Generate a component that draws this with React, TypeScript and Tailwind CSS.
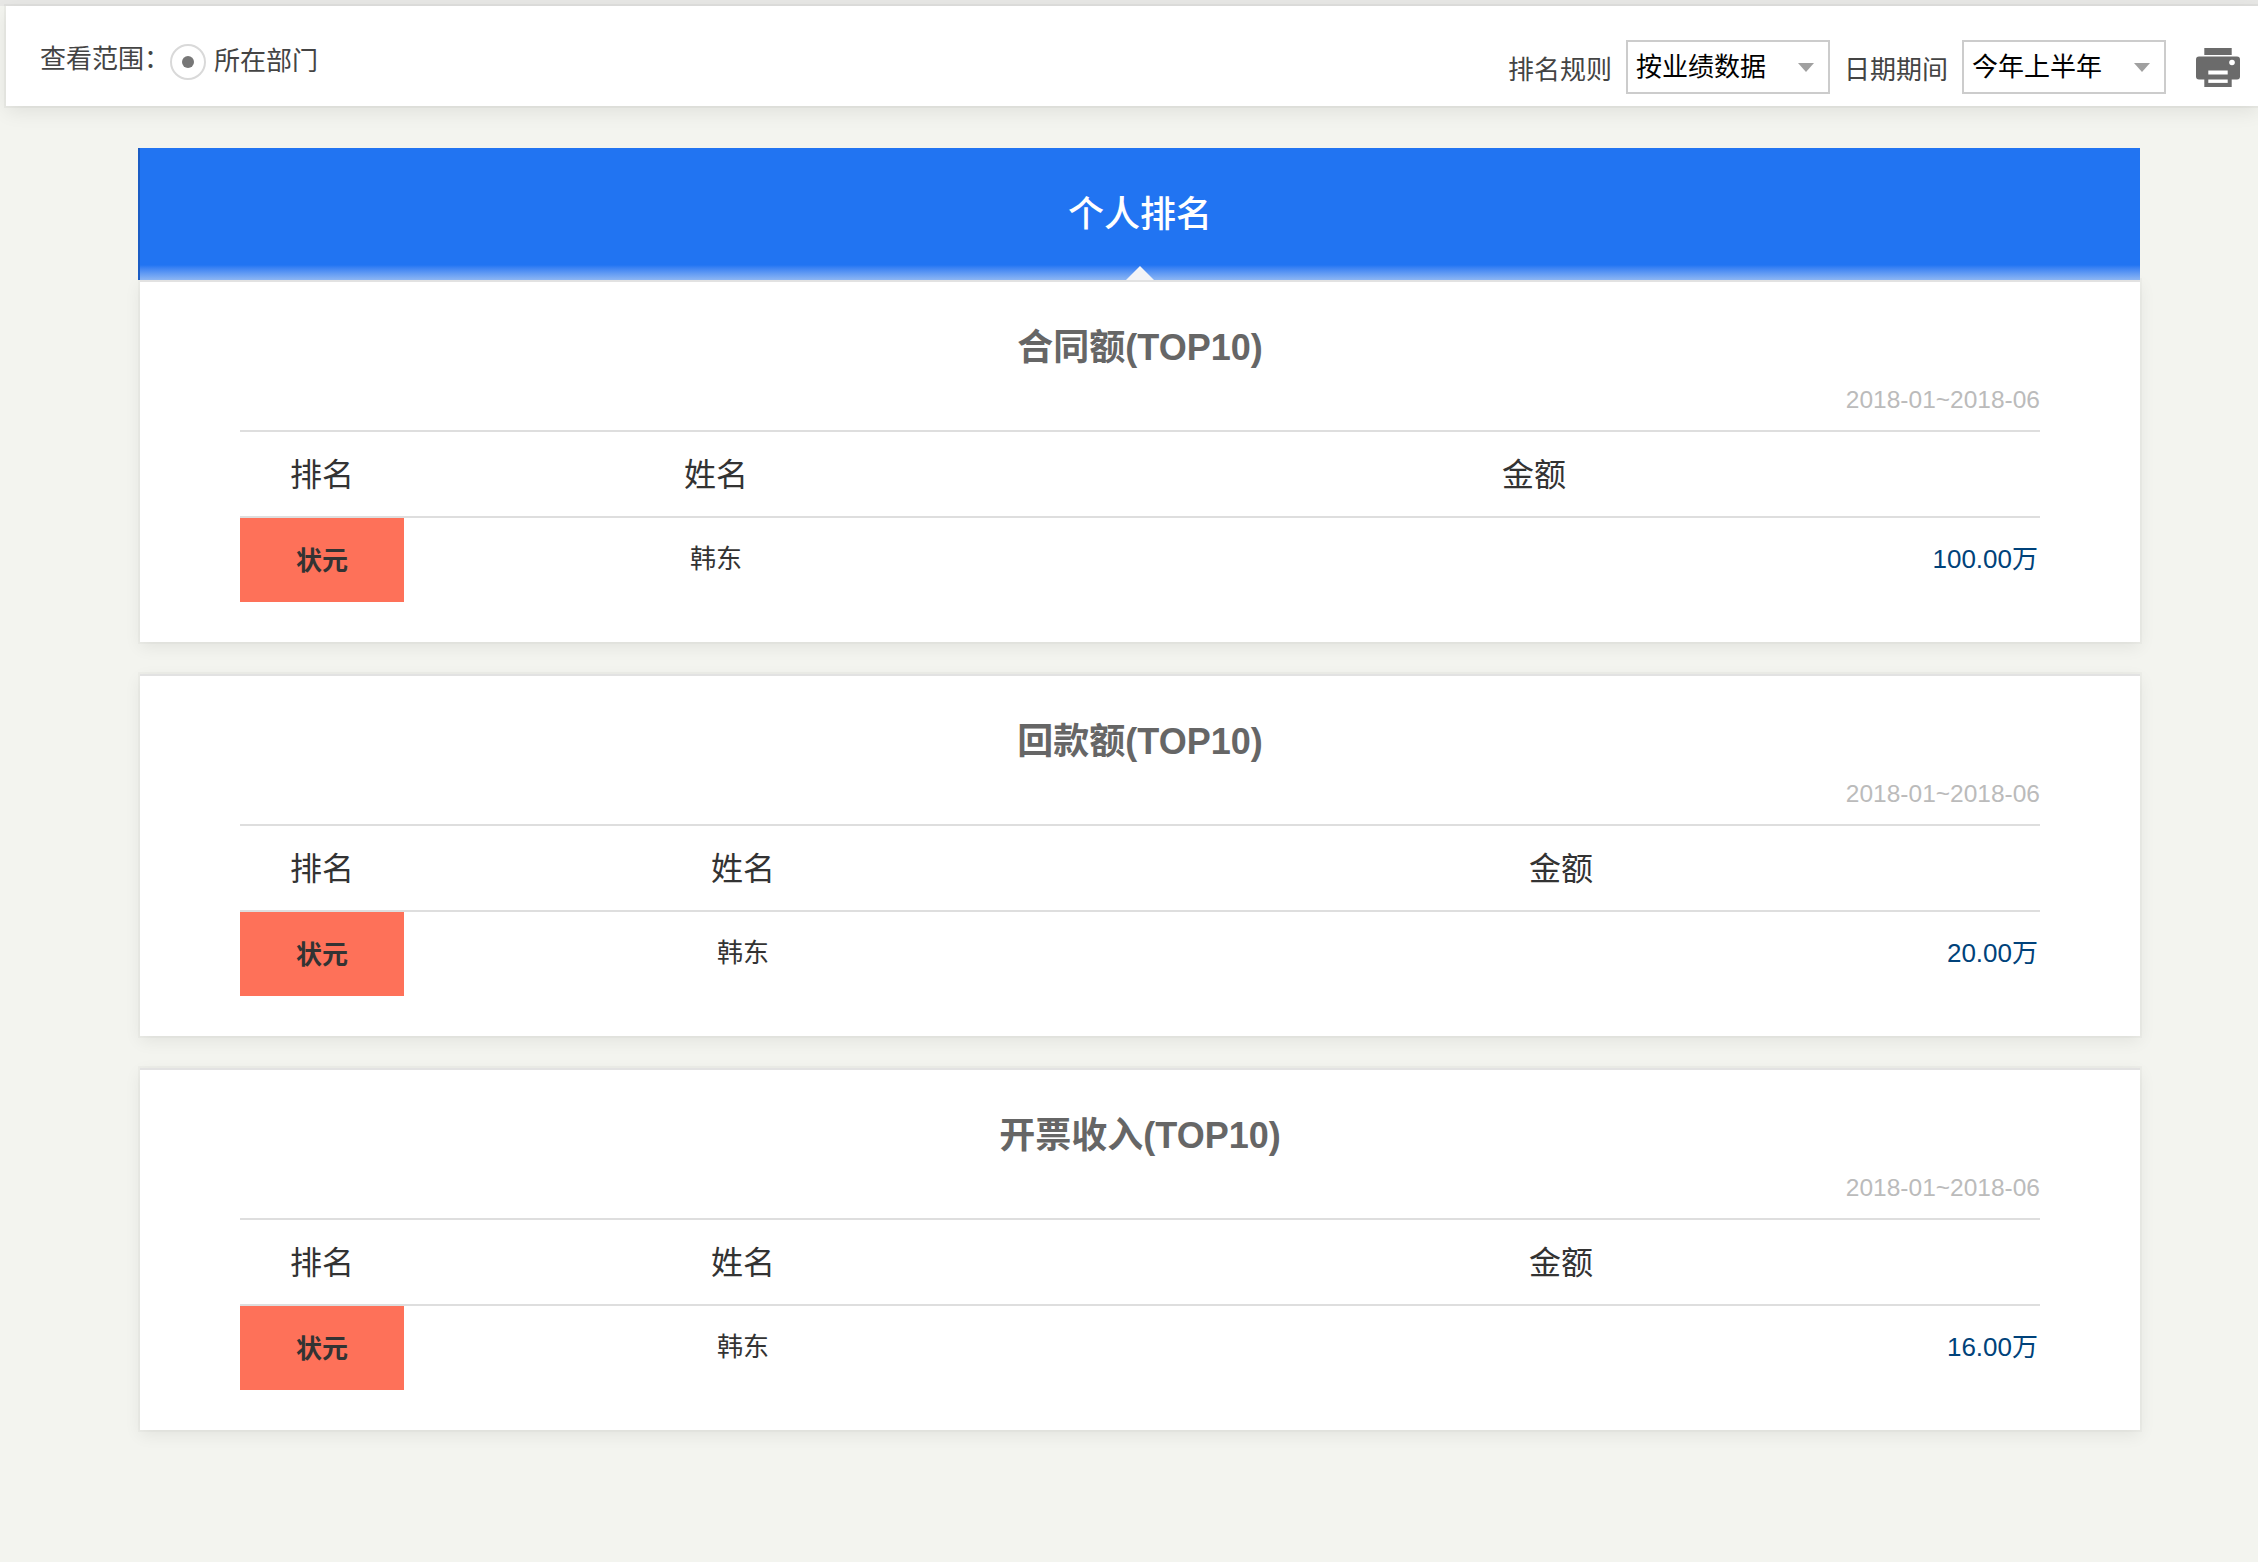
import React from "react";

const font = "font-['Liberation_Sans','Noto_Sans_CJK_SC',sans-serif]";

function SelectBox({ label }: { label: string }) {
  return (
    <div className="flex h-[54px] w-[204px] items-center justify-between border-2 border-[#cccccc] pl-[8px] pr-[14px] text-[26px] leading-[36px] text-black">
      <span className="mb-[1px]">{label}</span>
      <span className="h-0 w-0 border-x-[8px] border-t-[9px] border-x-transparent border-t-[#a0a0a0]" />
    </div>
  );
}

function Printer() {
  return (
    <svg viewBox="0 0 44 39" className="mt-[42px] ml-[30px] h-[39px] w-[44px]" fill="#6b6b6b">
      <rect x="8.3" y="0" width="27.4" height="7" />
      <rect x="0" y="8.5" width="44" height="23" rx="3" />
      <rect x="8.3" y="27" width="27.4" height="12" />
      <circle cx="36" cy="14.5" r="2.8" fill="#ffffff" />
      <rect x="12.3" y="22.5" width="19.4" height="4" fill="#ffffff" />
      <rect x="12.3" y="31.5" width="19.4" height="3.4" fill="#ffffff" />
    </svg>
  );
}

function TopBar() {
  return (
    <div className="ml-[6px] flex h-[100px] items-start justify-between bg-white shadow-[0_0_0_2px_rgba(0,0,0,0.03),0_6px_18px_rgba(0,0,0,0.08)]">
      <div className="flex items-start pl-[34px] text-[26px] leading-[36px] text-[#444444]">
        <span className="mt-[35px]">查看范围：</span>
        <span className="mt-[38px] flex h-[36px] w-[36px] items-center justify-center rounded-full border-2 border-[#d9d9d9]">
          <span className="h-[12px] w-[12px] rounded-full bg-[#777777]" />
        </span>
        <span className="mt-[37px] ml-[8px]">所在部门</span>
      </div>
      <div className="flex items-start pr-[18px] text-[26px] leading-[36px] text-[#444444]">
        <span className="mt-[46px] mr-[14px]">排名规则</span>
        <div className="mt-[34px]">
          <SelectBox label="按业绩数据" />
        </div>
        <span className="mt-[46px] mr-[14px] ml-[14px]">日期期间</span>
        <div className="mt-[34px]">
          <SelectBox label="今年上半年" />
        </div>
        <Printer />
      </div>
    </div>
  );
}

function Banner() {
  return (
    <div className="relative flex h-[132px] w-[2002px] items-center justify-center border-l-2 border-[#1a5cc4] bg-[#2174f2] pt-[2px] text-[36px] leading-[48px] font-medium text-white">
      <span>个人排名</span>
      <div className="absolute inset-x-0 bottom-0 h-[15px] bg-gradient-to-b from-[#2174f2] to-[#8db6f3]" />
      <div className="absolute bottom-0 left-[986px] h-0 w-0 border-x-[14px] border-b-[14px] border-x-transparent border-b-[#f2f4f7]" />
    </div>
  );
}

function RankCard({
  title,
  amount,
  cols,
}: {
  title: string;
  amount: string;
  cols: string;
}) {
  return (
    <section className="ml-[2px] w-[2000px] border-t-2 border-[#e2e2e2] bg-white px-[100px] pt-[43px] pb-[40px] shadow-[0_0_0_2px_rgba(0,0,0,0.025),0_5px_16px_rgba(0,0,0,0.07)]">
      <h2 className="h-[46px] text-center text-[36px] leading-[46px] font-bold text-[#666666]">{title}</h2>
      <div className="mt-[14px] h-[30px] text-right text-[24.5px] leading-[30px] text-[#bbbbbb]">2018-01~2018-06</div>
      <div className={`mt-[15px] grid ${cols} border-t-2 border-[#dedede]`}>
        <div className="flex h-[86px] items-center justify-center border-b-2 border-[#dedede] pt-[2px] text-[32px] text-[#333333]">排名</div>
        <div className="flex h-[86px] items-center justify-center border-b-2 border-[#dedede] pt-[2px] text-[32px] text-[#333333]">姓名</div>
        <div className="flex h-[86px] items-center justify-center border-b-2 border-[#dedede] pt-[2px] text-[32px] text-[#333333]">金额</div>
        <div className="flex h-[84px] items-center justify-center bg-[#fe7159] pt-[2px] text-[26px] font-bold text-[#333333]">状元</div>
        <div className="flex h-[84px] items-center justify-center pb-[2px] text-[26px] text-[#333333]">韩东</div>
        <div className="flex h-[84px] items-center justify-end pr-[2px] pb-[2px] text-[26px] text-[#00427a]">{amount}</div>
      </div>
    </section>
  );
}

export default function App() {
  return (
    <div className={`min-h-[1562px] bg-[#f3f4ef] pt-[6px] ${font}`}>
      <div className="absolute inset-x-0 top-0 h-[6px] bg-[#e7e7e5]" />
      <div className="relative">
        <TopBar />
      </div>
      <main className="mt-[42px] ml-[138px] flex w-[2002px] flex-col">
        <Banner />
        <div className="flex flex-col gap-[32px]">
          <RankCard title="合同额(TOP10)" amount="100.00万" cols="grid-cols-[164px_624px_1fr]" />
          <RankCard title="回款额(TOP10)" amount="20.00万" cols="grid-cols-[164px_678px_1fr]" />
          <RankCard title="开票收入(TOP10)" amount="16.00万" cols="grid-cols-[164px_678px_1fr]" />
        </div>
      </main>
    </div>
  );
}
